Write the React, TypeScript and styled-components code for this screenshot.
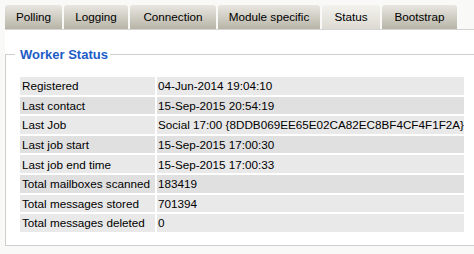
import React from 'react';
import styled, { createGlobalStyle } from 'styled-components';

const GlobalStyle = createGlobalStyle`
    html, body {
        margin: 0;
        padding: 0;
        background: #f9f9f7;
        overflow: hidden;
    }
    body {
        font-family: "Liberation Sans", Arial, sans-serif;
        font-size: 11.7px;
        color: #000;
    }
`;

const Page = styled.div`
    padding: 5px 0 0 5px;
`;

const TabBar = styled.div`
    display: flex;
    gap: 2px;
    height: 24px;
`;

const Tab = styled.div<{ $width: number; $active?: boolean }>`
    width: ${(p) => p.$width}px;
    height: 24px;
    line-height: 24px;
    text-align: center;
    border-radius: 3px 3px 0 0;
    background: ${(p) =>
        p.$active
            ? 'linear-gradient(#f3f2ee, #dcdad2)'
            : 'linear-gradient(#e8e6e0, #b8b4a7)'};
    white-space: nowrap;
`;

const Panel = styled.div`
    background: #fff;
    border-top: 1px solid #d4d4d4;
    margin-right: -20px;
    padding-top: 17px;
`;

const Fieldset = styled.fieldset`
    margin: 0;
    border: 1px solid #cfcfcf;
    padding: 13px 12px 11px 12px;
`;

const Legend = styled.legend`
    margin-left: -3px;
    padding: 0 2px 0 5px;
    font-size: 13px;
    line-height: 15px;
    font-weight: bold;
    color: #1c5cc6;
`;

const Table = styled.table`
    border-spacing: 2px;
    margin: 0;
    width: 448px;
`;

const Row = styled.tr<{ $dark?: boolean }>`
    background: ${(p) => (p.$dark ? '#e0e0e0' : '#e9e9e9')};
`;

const Label = styled.td`
    width: 133px;
    height: 17.6px;
    padding: 0 0 0 2px;
    white-space: nowrap;
    vertical-align: middle;
`;

const Value = styled.td`
    padding: 0 0 0 1px;
    white-space: nowrap;
    vertical-align: middle;
`;

const tabs = [
    { name: 'Polling', width: 57 },
    { name: 'Logging', width: 64 },
    { name: 'Connection', width: 86 },
    { name: 'Module specific', width: 102 },
    { name: 'Status', width: 58, active: true },
    { name: 'Bootstrap', width: 75 },
];

const rows = [
    { label: 'Registered', value: '04-Jun-2014 19:04:10' },
    { label: 'Last contact', value: '15-Sep-2015 20:54:19', dark: true },
    { label: 'Last Job', value: 'Social 17:00 {8DDB069EE65E02CA82EC8BF4CF4F1F2A}' },
    { label: 'Last job start', value: '15-Sep-2015 17:00:30', dark: true },
    { label: 'Last job end time', value: '15-Sep-2015 17:00:33' },
    { label: 'Total mailboxes scanned', value: '183419', dark: true },
    { label: 'Total messages stored', value: '701394' },
    { label: 'Total messages deleted', value: '0' },
];

const App = () => {
    return (
        <Page>
            <GlobalStyle />
            <TabBar>
                {tabs.map((t) => (
                    <Tab key={t.name} $width={t.width} $active={t.active}>
                        {t.name}
                    </Tab>
                ))}
            </TabBar>
            <Panel>
                <Fieldset>
                    <Legend>Worker Status</Legend>
                    <Table>
                        <tbody>
                            {rows.map((r) => (
                                <Row key={r.label} $dark={r.dark}>
                                    <Label>{r.label}</Label>
                                    <Value>{r.value}</Value>
                                </Row>
                            ))}
                        </tbody>
                    </Table>
                </Fieldset>
            </Panel>
        </Page>
    );
};

export default App;
